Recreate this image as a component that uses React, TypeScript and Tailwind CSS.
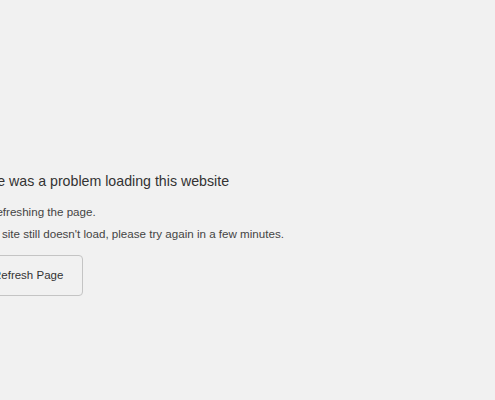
export default function App() {
  return (
    <div
      className="w-[495px] h-[400px] overflow-hidden bg-[#f1f1f1] text-[#444]"
      style={{ fontFamily: '"Liberation Sans", Arial, sans-serif' }}
    >
      <div className="ml-[-27px] pt-[171px] flex flex-col items-start">
        <h1 className="-ml-[5px] text-[14.2px] leading-[20px] text-[#333]">
          There was a problem loading this website
        </h1>
        <p className="mt-[11px] text-[11.6px] leading-[20px]">
          Try refreshing the page.
        </p>
        <p className="mt-[2px] text-[11.6px] leading-[20px]">
          If the site still doesn't load, please try again in a few minutes.
        </p>
        <button className="mt-[11px] h-[41px] pl-[19px] pr-[19px] border border-[#c4c4c4] rounded-[4px] bg-[#f1f1f1] text-[11.5px] text-[#333]">
          Refresh Page
        </button>
      </div>
    </div>
  );
}
